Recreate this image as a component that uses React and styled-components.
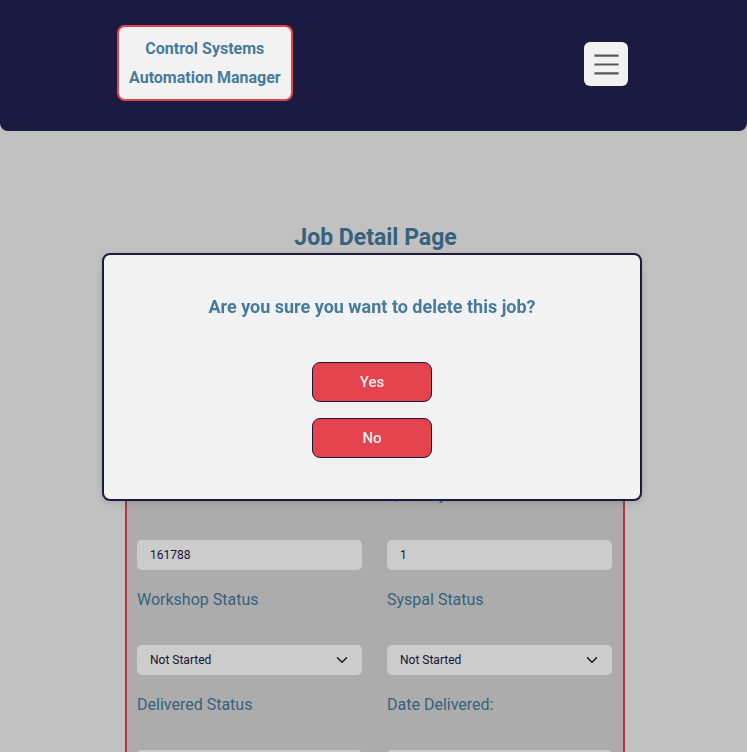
import React from 'react'
import styled, { createGlobalStyle } from 'styled-components'
import { ChevronDown } from 'lucide-react'

const GlobalStyle = createGlobalStyle`
    html, body {
        margin: 0;
        padding: 0;
        overflow: hidden;
    }
    body {
        background-color: #f2f2f2;
        font-family: Roboto, "Liberation Sans", Arial, sans-serif;
    }
`

const fields = [
    { label: 'Job Name', value: 'Conveyor Upgrade' },
    { label: 'Customer', value: 'Acme Foods' },
    { label: 'Start Date', value: '12/03/2024' },
    { label: 'Due Date', value: '28/03/2024' },
    { label: 'Job Number', value: '161788' },
    { label: 'Quantity', value: '1' },
    { label: 'Workshop Status', value: 'Not Started', select: true },
    { label: 'Syspal Status', value: 'Not Started', select: true },
    { label: 'Delivered Status', value: 'Not Delivered', select: true },
    { label: 'Date Delivered:', value: '' },
]

const App = () => {
    return (
        <>
            <GlobalStyle />
            <NavBar>
                <Logo>
                    Control Systems
                    <br />
                    Automation Manager
                </Logo>
                <MenuButton aria-label="menu">
                    <svg width="33" height="33" viewBox="0 0 30 30">
                        <path
                            d="M4 7h22M4 15h22M4 23h22"
                            stroke="rgba(33,37,41,0.75)"
                            strokeWidth="2"
                        />
                    </svg>
                </MenuButton>
            </NavBar>

            <Main>
                <PageTitle>Job Detail Page</PageTitle>
                <FormBox>
                    {fields.map(f => (
                        <Field key={f.label}>
                            <Label>{f.label}</Label>
                            {f.select ? (
                                <SelectWrap>
                                    <Select defaultValue={f.value}>
                                        <option>{f.value}</option>
                                    </Select>
                                    <Chevron size={18} strokeWidth={2} />
                                </SelectWrap>
                            ) : (
                                <Input defaultValue={f.value} />
                            )}
                        </Field>
                    ))}
                </FormBox>
            </Main>

            <Backdrop>
                <Modal>
                    <Question>Are you sure you want to delete this job?</Question>
                    <ModalButton>Yes</ModalButton>
                    <ModalButton>No</ModalButton>
                </Modal>
            </Backdrop>
        </>
    )
}

export default App

const NavBar = styled.header`
    position: relative;
    z-index: 20;
    height: 131px;
    background-color: #1b1a41;
    border-radius: 0 0 8px 8px;
    display: flex;
    align-items: center;
    justify-content: space-between;
    padding: 0 119px 5px 117px;
    box-sizing: border-box;
`

const Logo = styled.div`
    background-color: #f2f2f2;
    border: 2px solid #e5444e;
    border-radius: 8px;
    padding: 7px 10px;
    color: #457b9d;
    font-size: 16px;
    font-weight: 700;
    line-height: 29px;
    text-align: center;
`

const MenuButton = styled.button`
    width: 44px;
    height: 44px;
    margin-top: 2px;
    padding: 0;
    border: none;
    border-radius: 6px;
    background-color: #f2f2f2;
    display: flex;
    align-items: center;
    justify-content: center;
`

const Main = styled.main`
    display: flex;
    flex-direction: column;
    align-items: center;
    padding-top: 94px;
`

const PageTitle = styled.h1`
    margin: 0 0 12px 4px;
    font-size: 23px;
    line-height: 26px;
    font-weight: 700;
    color: #457b9d;
`

const FormBox = styled.form`
    width: 500px;
    margin-left: 3px;
    box-sizing: border-box;
    border: 2px solid #e5444e;
    background-color: #d8d8d8;
    padding: 10px 11px 20px 10px;
    display: grid;
    grid-template-columns: 225px 225px;
    column-gap: 25px;
    row-gap: 20px;
`

const Field = styled.div`
    display: flex;
    flex-direction: column;
`

const Label = styled.label`
    font-size: 16px;
    line-height: 19px;
    color: #457b9d;
    margin-bottom: 36px;
`

const Input = styled.input`
    height: 30px;
    box-sizing: border-box;
    border: none;
    border-radius: 5px;
    background-color: #ffffff;
    padding: 0 13px;
    font-family: Roboto, "Liberation Sans", Arial, sans-serif;
    font-size: 12px;
    color: #1b1a41;
`

const SelectWrap = styled.div`
    position: relative;
`

const Select = styled.select`
    width: 100%;
    height: 30px;
    box-sizing: border-box;
    appearance: none;
    border: none;
    border-radius: 5px;
    background-color: #ffffff;
    padding: 0 13px;
    font-family: Roboto, "Liberation Sans", Arial, sans-serif;
    font-size: 12px;
    color: #1b1a41;
`

const Chevron = styled(ChevronDown)`
    position: absolute;
    right: 11px;
    top: 6px;
    color: #222;
    pointer-events: none;
`

const Backdrop = styled.div`
    position: fixed;
    inset: 0;
    z-index: 10;
    background-color: rgba(0, 0, 0, 0.2);
    display: flex;
    align-items: center;
    justify-content: center;
`

const Modal = styled.div`
    width: 540px;
    height: 248px;
    margin: 2px 3px 0 0;
    box-sizing: border-box;
    background-color: #f2f2f2;
    border: 2px solid #1b1a41;
    border-radius: 8px;
    box-shadow: 0 2px 8px rgba(0, 0, 0, 0.15);
    display: flex;
    flex-direction: column;
    align-items: center;
    padding-top: 41px;
`

const Question = styled.h3`
    margin: 0 0 44px;
    font-size: 18px;
    line-height: 22px;
    font-weight: 700;
    color: #457b9d;
`

const ModalButton = styled.button`
    width: 120px;
    height: 40px;
    margin-bottom: 16px;
    border: 1px solid #1b1a41;
    border-radius: 8px;
    background-color: #e5444e;
    color: #f1f1f1;
    font-family: Roboto, "Liberation Sans", Arial, sans-serif;
    font-size: 15px;
    font-weight: 500;
`
